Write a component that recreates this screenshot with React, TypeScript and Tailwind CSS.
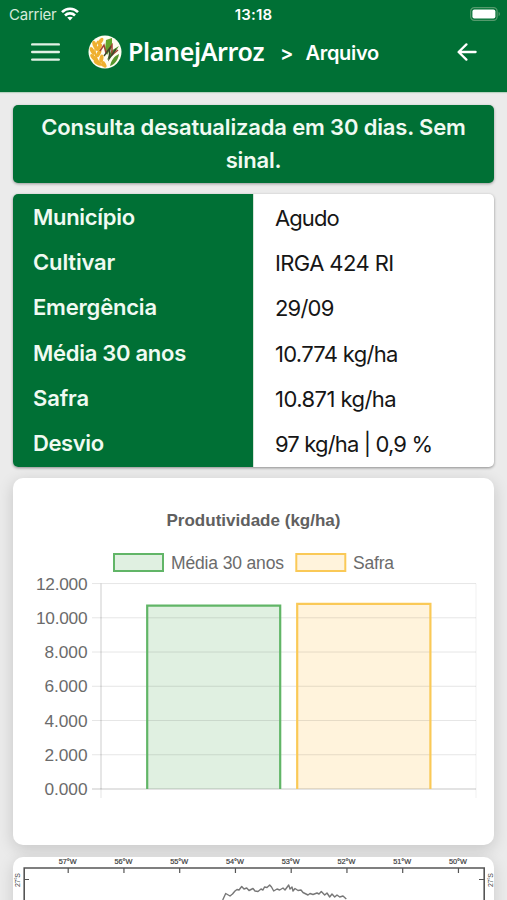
import { ReactNode } from "react";
import clsx from "clsx";

const rows = [
  { label: "Município", value: "Agudo", labelTracking: "tracking-[-0.3px]", valueTracking: "tracking-[-0.9px]" },
  { label: "Cultivar", value: "IRGA 424 RI", labelTracking: "tracking-[-0.15px]", valueTracking: "tracking-[-0.6px]" },
  { label: "Emergência", value: "29/09", labelTracking: "tracking-[-0.2px]", valueTracking: "tracking-[-0.8px]" },
  { label: "Média 30 anos", value: "10.774 kg/ha", labelTracking: "tracking-[-0.28px]", valueTracking: "tracking-[-0.7px]" },
  { label: "Safra", value: "10.871 kg/ha", labelTracking: "tracking-[-0.15px]", valueTracking: "tracking-[-0.55px]" },
  { label: "Desvio", value: "97 kg/ha | 0,9 %", labelTracking: "tracking-[-0.4px]", valueTracking: "tracking-[-0.85px]" },
];

const yTicks = [12, 10, 8, 6, 4, 2, 0];

const longitudes = ["57°W", "56°W", "55°W", "54°W", "53°W", "52°W", "51°W", "50°W"];

const Card = ({ children, className }: { children: ReactNode; className?: string }) => (
  <section className={clsx("overflow-hidden", className)}>{children}</section>
);

const StatusBar = () => (
  <div className="grid h-7 grid-cols-3 items-center pl-[9px] pr-[6px] text-[15px] leading-none">
    <div className="flex items-center gap-[5px]">
      <span className="tracking-[-0.25px] text-[#d5eadb]">Carrier</span>
      <svg width="18" height="14" viewBox="0 0 18 14" fill="none" stroke="white" strokeWidth="2.6">
        <path d="M1 5.2C5.4 0.6 12.6 0.6 17 5.2" />
        <path d="M4 8.5C6.8 5.7 11.2 5.7 14 8.5" />
        <path d="M9 13.4L6.2 10.6C7.8 9.3 10.2 9.3 11.8 10.6Z" fill="white" stroke="none" />
      </svg>
    </div>
    <span className="-ml-[3px] text-center font-semibold tracking-[0.15px]">13:18</span>
    <svg className="justify-self-end" width="31" height="14" viewBox="0 0 31 14">
      <rect x="0.7" y="0.7" width="26.4" height="12.6" rx="3.6" fill="none" stroke="#559a6d" strokeWidth="1.2" />
      <rect x="2.4" y="2.4" width="23" height="9.2" rx="2" fill="white" />
      <path d="M28.6 4.8C30.4 5.6 30.4 8.4 28.6 9.2Z" fill="#559a6d" />
    </svg>
  </div>
);

const Logo = () => (
  <svg width="34" height="34" viewBox="0 0 34 34" fill="none">
    <circle cx="17" cy="17" r="16.5" fill="#fffdf2" />
    {/* Wheat ear */}
    <path d="M10 6C5 14 6 24 15 31" stroke="#edae2e" strokeWidth="1.6" />
    <g fill="#efb02f">
      <ellipse cx="12.4" cy="6.4" rx="2" ry="4.2" transform="rotate(35 12.4 6.4)" />
      <ellipse cx="6.6" cy="9.8" rx="2" ry="4.2" transform="rotate(-18 6.6 9.8)" />
      <ellipse cx="11" cy="12.4" rx="2" ry="4.2" transform="rotate(38 11 12.4)" />
      <ellipse cx="4.4" cy="16" rx="2" ry="4.2" transform="rotate(-28 4.4 16)" />
      <ellipse cx="10.6" cy="18.4" rx="2" ry="4.2" transform="rotate(30 10.6 18.4)" />
      <ellipse cx="5.6" cy="22.6" rx="2" ry="4.4" transform="rotate(-42 5.6 22.6)" />
      <ellipse cx="13.4" cy="23.6" rx="2" ry="4.2" transform="rotate(10 13.4 23.6)" />
      <ellipse cx="9.6" cy="27.8" rx="2" ry="4.4" transform="rotate(-58 9.6 27.8)" />
      <ellipse cx="16" cy="29.4" rx="2" ry="3.6" transform="rotate(-30 16 29.4)" />
    </g>
    {/* Leaves and chart lines */}
    <path d="M18 5L24 3L24 12L19 20L17 15Z" fill="#63a52b" />
    <path d="M31 11L25 20L19 25L23 16Z" fill="#4a8e26" />
    <path d="M31 19C30 25 27 29 22 31C23 26 26 21 31 19Z" fill="#57962c" />
    <path d="M12 16L16 10L18 18L24 10L24 20L30 15" stroke="#a34334" strokeWidth="1.5" />
    <path d="M16 21L22 13L21 24L28 14" stroke="#3b4a2a" strokeWidth="1.4" />
  </svg>
);

const Header = () => (
  <header className="h-[92px] shrink-0 bg-[#007035] text-white shadow-[0_1px_1px_#b9d2c1]">
    <StatusBar />
    <div className="flex h-12 items-center pl-[31px] pr-[30px]">
      <svg width="29" height="18" viewBox="0 0 29 18" stroke="#e1f1e5" strokeWidth="2.4" strokeLinecap="round">
        <path d="M1.2 1.4H27.8M1.2 9H27.8M1.2 16.6H27.8" />
      </svg>
      <div className="ml-7">
        <Logo />
      </div>
      <span className="-mt-px ml-[6px] w-[150px] whitespace-nowrap pb-px font-['Noto_Sans'] text-[25px] font-semibold leading-none tracking-[-0.35px]">
        PlanejArroz
      </span>
      <span className="ml-[2px] mt-[2px] text-[20px] font-semibold">&gt;</span>
      <span className="ml-[12px] mt-[2px] text-[20px] font-semibold tracking-[-0.3px]">Arquivo</span>
      <svg
        className="ml-auto"
        width="20"
        height="18"
        viewBox="0 0 20 18"
        fill="none"
        stroke="white"
        strokeWidth="2.3"
        strokeLinecap="round"
        strokeLinejoin="round"
      >
        <path d="M9.4 1.4L1.6 9L9.4 16.6M2 9H18.6" />
      </svg>
    </div>
  </header>
);

const ProductivityChart = () => (
  <svg width="482" height="367" viewBox="0 0 482 367" fill="#6b6b6b" className="font-['Liberation_Sans',sans-serif]">
    <text x="153.5" y="48" fontSize="17" fontWeight="700" fill="#606060" textLength="174">
      Produtividade (kg/ha)
    </text>

    {/* Legend */}
    <rect x="101" y="76" width="49" height="17" fill="#e0f0e1" stroke="#61b567" strokeWidth="2" />
    <text x="158" y="91" fontSize="17.5" textLength="113">Média 30 anos</text>
    <rect x="283.3" y="76" width="49" height="17" fill="#fff3dc" stroke="#fac957" strokeWidth="2" />
    <text x="340" y="91" fontSize="17.5" textLength="41">Safra</text>

    {/* Bars */}
    <rect x="134" y="127" width="133.5" height="184" fill="#e0f0e1" />
    <rect x="284" y="126" width="133.5" height="185" fill="#fff3dc" />

    {/* Grid */}
    {yTicks.map((tick) => {
      const y = 311 - tick * 17.12;
      return (
        <g key={tick}>
          <line x1="79" x2="463" y1={y} y2={y} stroke="black" strokeOpacity={tick === 0 ? 0.22 : 0.1} />
          <text x="74.5" y={y + 6} fontSize="17.3" textAnchor="end" textLength={tick >= 10 ? 51.5 : 43}>
            {tick}.000
          </text>
        </g>
      );
    })}
    <line x1="88" x2="88" y1="105.5" y2="311" stroke="black" strokeOpacity="0.2" />
    <line x1="88" x2="88" y1="311" y2="320" stroke="black" strokeOpacity="0.1" />
    <line x1="463" x2="463" y1="105.5" y2="320" stroke="black" strokeOpacity="0.06" />

    {/* Bar outlines */}
    <path d="M134.2 311V127.6H267.2V311" fill="none" stroke="#61b567" strokeWidth="2.2" />
    <path d="M284.2 311V125.8H417.4V311" fill="none" stroke="#fac957" strokeWidth="2.2" />
  </svg>
);

const StateMap = () => (
  <svg width="482" height="60" viewBox="0 0 482 60" fill="#3f3f3f" className="font-['Liberation_Sans',sans-serif]">
    <path d="M11.2 60V11H471.2V60" fill="none" stroke="#555555" strokeWidth="1.6" />
    {longitudes.map((label, i) => {
      const x = 55.2 + i * 55.75;
      return (
        <g key={label}>
          <line x1={x} x2={x} y1="11" y2="16" stroke="#555555" strokeWidth="1.2" />
          <text x={x - 9.5} y="7.2" fontSize="7" stroke="#3f3f3f" strokeWidth="0.2" textLength="18" lengthAdjust="spacingAndGlyphs">
            {label}
          </text>
        </g>
      );
    })}
    <path d="M11 22.5H16M466 22.5H471" stroke="#555555" strokeWidth="1.1" />
    <text transform="translate(6.5 30) rotate(-90)" fontSize="7" textLength="14">27°S</text>
    <text transform="translate(480 30) rotate(-90)" fontSize="7" textLength="14">27°S</text>
    {/* Northern border of the state */}
    <path
      d="M209.7 43L212.7 36.5L217 39L219.5 37L222 34L224 32.5L226 33L228.7 29.5L231 32L233.7 31L236 33.5L240 31.5L242 34L245 34.5L248 32L250 33L251.5 30L254 30.5L256.7 28L258.5 30L260.7 34L264 32L266.7 33L270 31L272 33L275.7 28L277 32L279 30L280 34L282 31.5L285 33.5L288 33L290 35.5L295 38L297 36.5L300 37.5L304 36L306 37L308.3 34.5L311.7 38L314 36L316.7 40L319 37L321.7 40L324 38L326.7 40L330 39L333.3 42"
      fill="none"
      stroke="#777777"
      strokeWidth="1.4"
      strokeLinejoin="round"
    />
  </svg>
);

export default function App() {
  return (
    <div className="flex h-[900px] w-[507px] flex-col overflow-hidden bg-[#ebebeb] font-['Inter',sans-serif]">
      <Header />
      <main className="flex flex-col px-[13px] pt-[13px]">
        <Card className="h-[78px] shrink-0 rounded-[5px] bg-[#007035] text-center text-[22px] font-semibold leading-[33px] tracking-[-0.16px] text-[#f0faf2] shadow-[0_1px_3px_rgba(0,0,0,0.35)]">
          <p className="mt-[6px]">
            Consulta desatualizada em 30 dias. Sem
            <br />
            sinal.
          </p>
        </Card>

        <Card className="mt-[11px] flex h-[273px] shrink-0 rounded-[5px] bg-white text-[22px] leading-[45.2px] shadow-[0_1px_3px_rgba(0,0,0,0.4)]">
          <div className="w-[240px] bg-[#007035] pl-5 pt-px font-semibold text-[#f0faf2]">
            {rows.map((row) => (
              <p key={row.label} className={row.labelTracking}>
                {row.label}
              </p>
            ))}
          </div>
          <div className="flex-1 border-l border-[#d5e3d7] pl-[21px] pt-[2px] text-[#161616]">
            {rows.map((row) => (
              <p key={row.label} className={row.valueTracking}>
                {row.value}
              </p>
            ))}
          </div>
        </Card>

        <Card className="mt-[11px] h-[367px] shrink-0 rounded-[10px] bg-white shadow-[0_4px_16px_rgba(0,0,0,0.16)]">
          <ProductivityChart />
        </Card>

        <Card className="mt-3 h-[60px] shrink-0 rounded-t-[10px] bg-white shadow-[0_4px_16px_rgba(0,0,0,0.14)]">
          <StateMap />
        </Card>
      </main>
    </div>
  );
}
